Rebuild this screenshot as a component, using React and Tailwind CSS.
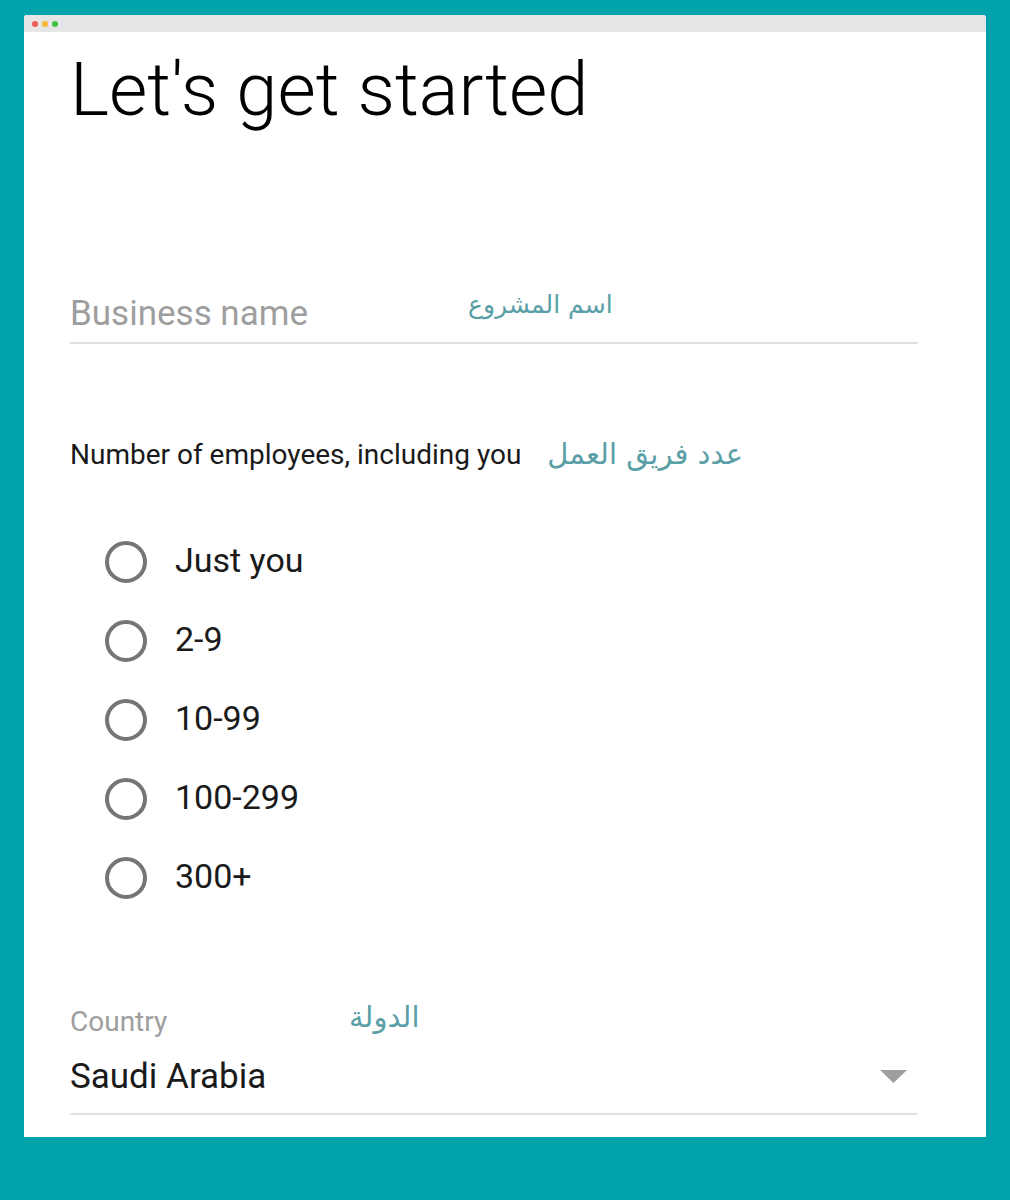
import React from 'react';

const arabic = { fontFamily: '"DejaVu Sans", "Noto Sans", sans-serif' };

const options = ['Just you', '2-9', '10-99', '100-299', '300+'];

const Radio = ({ label }) => (
  <div className="flex items-center h-[79px]">
    <span className="w-[42px] h-[42px] rounded-full border-[4px] border-[#757575] ml-[35px] shrink-0" />
    <span className="ml-[28px] -mt-[3px] text-[34px] text-[#1a1a1a]">{label}</span>
  </div>
);

export default function App() {
  return (
    <div className="w-[1010px] h-[1200px] bg-[#00a3ac] pt-[15px] px-[24px]" style={{ fontFamily: 'Roboto, "Liberation Sans", sans-serif' }}>
      <div className="bg-white h-[1122px] rounded-t-[3px] overflow-hidden">
        <div className="h-[17px] bg-[#e6e6e6] flex items-center gap-[4px] pl-[8px]">
          <span className="w-[6px] h-[6px] rounded-full bg-[#f05a55]" />
          <span className="w-[6px] h-[6px] rounded-full bg-[#f5b731]" />
          <span className="w-[6px] h-[6px] rounded-full bg-[#3fc13f]" />
        </div>
        <div className="pl-[46px] pr-[68px]">
          <h1 className="text-[74px] font-light leading-none text-black mt-[21px]">Let's get started</h1>

          <div className="mt-[169px] relative border-b-2 border-[#e0e0e0] pb-[11px]">
            <span className="block text-[35px] text-[#9e9e9e] leading-none">Business name</span>
            <span className="absolute left-[398px] top-[-10px] text-[25px] text-[#5a9fa6]" style={arabic} dir="rtl">اسم المشروع</span>
          </div>

          <div className="mt-[89px] flex items-center">
            <span className="text-[28px] text-[#1a1a1a]">Number of employees, including you</span>
            <span className="ml-[26px] text-[29px] text-[#5a9fa6]" style={arabic} dir="rtl">عدد فريق العمل</span>
          </div>

          <div className="mt-[46px] flex flex-col">
            {options.map((o) => (
              <Radio key={o} label={o} />
            ))}
          </div>

          <div className="mt-[83px] relative">
            <span className="block text-[28px] leading-[42px] text-[#9e9e9e]">Country</span>
            <span className="absolute left-[279px] top-[-5px] text-[29px] text-[#5a9fa6]" style={arabic} dir="rtl">الدولة</span>
          </div>
          <div className="mt-[16px] border-b-2 border-[#e0e0e0] rounded-b-[2px] flex items-center justify-between pb-[19px]">
            <span className="text-[35px] text-[#1a1a1a] leading-none">Saudi Arabia</span>
            <svg width="27" height="13" viewBox="0 0 27 13" className="mr-[11px]">
              <path d="M0 0 L27 0 L13.5 13 Z" fill="#9e9e9e" />
            </svg>
          </div>
        </div>
      </div>
    </div>
  );
}
